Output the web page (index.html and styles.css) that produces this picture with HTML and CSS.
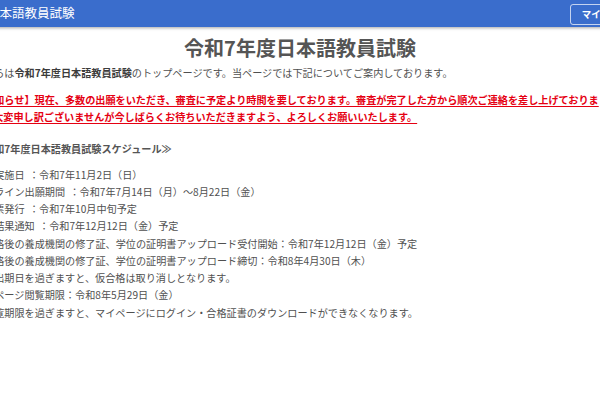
FILE: index.html
```html
<!DOCTYPE html>
<html lang="ja">
<head>
<meta charset="utf-8">
<title>令和7年度日本語教員試験</title>
<link rel="stylesheet" href="styles.css">
</head>
<body>
<div class="page">
  <header class="topbar">
    <div class="brand">日本語教員試験</div>
    <a class="mypage-btn" href="#">マイページ</a>
  </header>
  <main class="content">
    <h1 class="title">令和7年度日本語教員試験</h1>
    <p class="intro">こちらは<strong>令和7年度日本語教員試験</strong>のトップページです。当ページでは下記についてご案内しております。</p>
    <p class="notice">【お知らせ】現在、多数の出願をいただき、審査に予定より時間を要しております。審査が完了した方から順次ご連絡を差し上げております。大変申し訳ございませんが今しばらくお待ちいただきますよう、よろしくお願いいたします。</p>
    <h2 class="schedule-head">≪令和7年度日本語教員試験スケジュール≫</h2>
    <ul class="schedule">
      <li>試験実施日 ：令和7年11月2日（日）</li>
      <li>オンライン出願期間 ：令和7年7月14日（月）～8月22日（金）</li>
      <li>受験票発行 ：令和7年10月中旬予定</li>
      <li>合否結果通知 ：令和7年12月12日（金）予定</li>
      <li>仮合格後の養成機関の修了証、学位の証明書アップロード受付開始：令和7年12月12日（金）予定</li>
      <li>仮合格後の養成機関の修了証、学位の証明書アップロード締切：令和8年4月30日（木）</li>
      <li>※提出期日を過ぎますと、仮合格は取り消しとなります。</li>
      <li>マイページ閲覧期限：令和8年5月29日（金）</li>
      <li>※閲覧期限を過ぎますと、マイページにログイン・合格証書のダウンロードができなくなります。</li>
    </ul>
  </main>
</div>
</body>
</html>
```
FILE: styles.css
```css
html, body {
  margin: 0;
  padding: 0;
  overflow: hidden;
  background: #ffffff;
}

body {
  font-family: "Noto Sans CJK JP", "Noto Sans", sans-serif;
  color: #505050;
}

.page {
  width: 692px;
  margin-left: -46px;
}

.topbar {
  height: 27px;
  background: #3a6dcc;
  box-shadow: 0 1px 3px rgba(0, 0, 0, 0.35);
  display: flex;
  align-items: center;
  justify-content: space-between;
  padding: 0 6px 0 33px;
}

.brand {
  color: #ffffff;
  font-size: 12.5px;
  line-height: 1;
}

.mypage-btn {
  height: 19px;
  display: flex;
  align-items: center;
  padding: 0 10px 0 11px;
  border: 1px solid rgba(255, 255, 255, 0.7);
  border-radius: 3px;
  color: #ffffff;
  font-size: 9.5px;
  font-weight: bold;
  text-decoration: none;
  margin-top: 1px;
}

.content {
  padding: 0 20px;
}

.title {
  margin: 7px 0 2px;
  font-size: 20px;
  line-height: 28px;
  font-weight: bold;
  text-align: center;
  color: #555555;
}

.intro {
  margin: 0;
  font-size: 10.15px;
  line-height: 17px;
}

.intro strong {
  color: #3c3c3c;
}

.notice {
  margin: 10px 20px 0 0;
  font-size: 10.15px;
  line-height: 17.25px;
  font-weight: bold;
  color: #e50012;
  text-decoration: underline;
  text-underline-offset: 2px;
}

.schedule-head {
  margin: 14px 0 0;
  font-size: 10.15px;
  line-height: 17px;
  font-weight: bold;
  color: #555555;
}

.schedule {
  list-style: none;
  margin: 9px 0 0;
  padding: 0;
  font-size: 10.15px;
  line-height: 17.25px;
  word-spacing: 2px;
}
```
